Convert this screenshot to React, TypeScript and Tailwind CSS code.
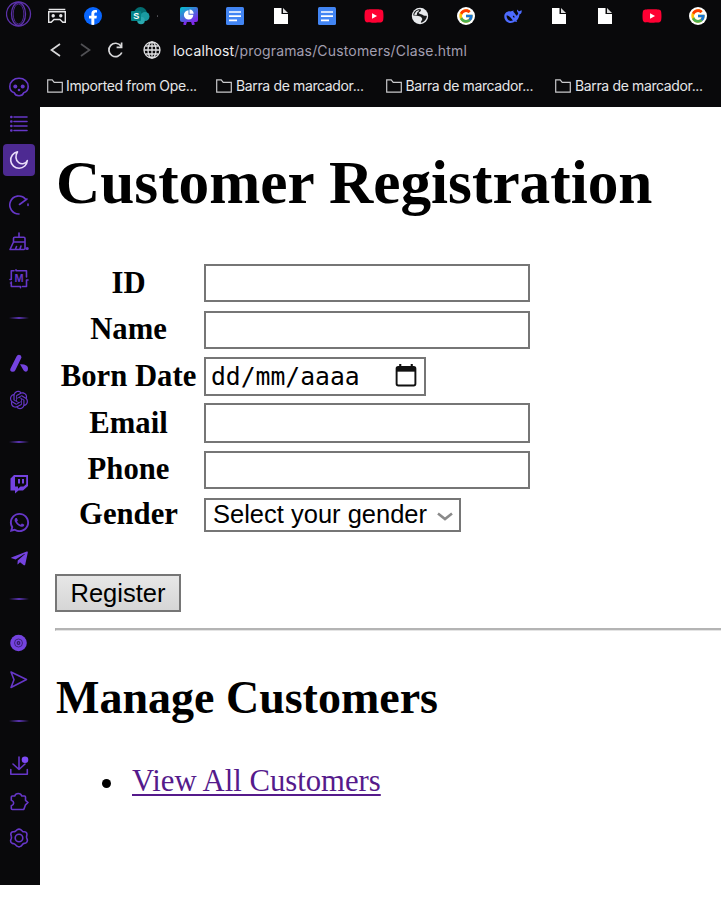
import React from "react";
import { FaFacebookF, FaTelegramPlane, FaYoutube } from "react-icons/fa";
import { FcGoogle } from "react-icons/fc";
import { RiOpenaiFill, RiWhatsappLine } from "react-icons/ri";

type Kids = { children: React.ReactNode };

function Line({ children }: Kids) {
  return (
    <svg viewBox="0 0 20 20" className="size-5" fill="none" stroke="currentColor" strokeWidth="1.6" strokeLinecap="round" strokeLinejoin="round">
      {children}
    </svg>
  );
}

function Separator({ className }: { className: string }) {
  return <div className={`h-0.5 w-5 shrink-0 bg-linear-to-r from-transparent via-[#5b34b4] to-transparent ${className}`} />;
}

function Item({ className, children }: Kids & { className: string }) {
  return <div className={`flex size-5 shrink-0 items-center justify-center ${className}`}>{children}</div>;
}

function Sidebar() {
  return (
    <aside className="flex h-[885px] w-10 shrink-0 flex-col items-center bg-[#09090b] pr-0.5 text-[#6637c8]">
      <svg viewBox="0 0 26 26" className="mt-px h-[26px] w-[26px] shrink-0" fill="none" stroke="#5c31aa" strokeWidth="1.3">
        <circle cx="12.5" cy="13" r="12" />
        <ellipse cx="12.5" cy="13" rx="7" ry="11.5" />
        <ellipse cx="12.5" cy="13" rx="5.3" ry="10" strokeWidth=".8" />
      </svg>
      <Item className="mt-[50px]">
        <Line>
          <path d="M5.3 15.8C1.8 14.8.8 12.800.8 9.500c0-5 4-8.200 9.200-8.200s9.200 3.200 9.200 8.200c0 3.300-1 5.300-4.500 6.300-.7 2.300-2.200 3-4.700 3s-4-.7-4.700-3z" />
          <g fill="currentColor" stroke="none"><circle cx="6.3" cy="9.5" r="2" /><circle cx="13.7" cy="9.5" r="2" /><circle cx="10" cy="13" r="1.3" /></g>
        </Line>
      </Item>
      <Item className="mt-[17px]">
        <Line>
          <path d="M5 3h13M5 7.500h13M5 12h13M5 16.500h13" />
          <path d="M2.300 3h.1M2.300 7.500h.1M2.300 12h.1M2.300 16.500h.1" strokeWidth="2.6" />
        </Line>
      </Item>
      <div className="mt-2.5 flex h-8 w-8 shrink-0 items-center justify-center rounded-[4px] bg-[#4d2a92] text-[#e9defa]">
        <Line><path d="M8.500 1.800a8.300 8.300 0 1 0 9.800 8.700c-1.300 3.200-5.600 4.300-8.600 2.200C6.300 10.300 6.200 5.300 8.500 1.800z" /></Line>
      </div>
      <Item className="mt-[19px]">
        <Line><path d="M10 19A9 9 0 1 1 16.500 4M19 9v1.500M10.500 9.500 18 4" /></Line>
      </Item>
      <Item className="mt-[17px]">
        <Line>
          <path d="M10 1v4M4.500 10V6.500q0-1.300 1.300-1.300h9q1.200 0 1.200 1.300V17M4.500 10H16M4.500 10 1 17.500h14M7.500 14.500 6.500 17M12 14l-1 3" />
          <circle cx="18.2" cy="16.5" r=".8" fill="currentColor" />
        </Line>
      </Item>
      <Item className="mt-[17px]">
        <div className="relative size-5">
          <Line><path d="M7 1.800h10.500V8M19 11h-1.500v6.500H13.500M11.500 18.700v-1.200H2.300V13M1 10.500h1.300V1.800H5M7 .8v1M1.500 14h.5" /></Line>
          <span className="absolute inset-0 text-center font-['Liberation_Sans'] text-[11px] leading-[19px] font-bold">M</span>
        </div>
      </Item>
      <Separator className="mt-[28px]" />
      <Item className="mt-[35px]">
        <svg viewBox="0 0 20 20" className="size-5" fill="#7443df">
          <path d="M10 .8q2.500.2 2.500 2.700L6.300 16.300q-.8 1.600-2.700 1.500-3.300-.4-2.100-3.300L7.500 2.500Q8.300.7 10 .8z" />
          <path d="M11 10.300q3.800-.4 6.300 1.200c1.500 1 2 2.300 1.500 4.500-.7 2.500-3.300 1.900-4.300.2z" />
        </svg>
      </Item>
      <Item className="mt-4"><RiOpenaiFill className="size-[22px] shrink-0" /></Item>
      <Separator className="mt-[31px]" />
      <Item className="mt-[31px]">
        <svg viewBox="0 0 20 20" className="size-5">
          <path fill="#7443df" fillRule="evenodd" d="M5 1h14v11l-5 4.500h-4.500L6 19.500V16.500H1.500V4.500zm1 2v9.500h3v2.300l2.500-2.300h3l2.700-2.300V3z" />
          <path stroke="#7443df" strokeWidth="2" d="M10 5v4.500M14 5v4.500" />
        </svg>
      </Item>
      <Item className="mt-[18px]">
        <RiWhatsappLine className="size-[23px] shrink-0" />
      </Item>
      <Item className="mt-4"><FaTelegramPlane className="size-[19px] shrink-0 text-[#7443df]" /></Item>
      <Separator className="mt-[30px]" />
      <Item className="mt-[33px]">
        <svg viewBox="0 0 20 20" className="size-5" fill="none" stroke="#351a66">
          <circle cx="9.5" cy="10" r="8.3" fill="#7443df" stroke="none" />
          <circle cx="9.5" cy="10" r="4" strokeWidth=".8" />
          <circle cx="9.5" cy="10" r="1.3" strokeWidth="1.2" />
        </svg>
      </Item>
      <Item className="mt-[17px]"><Line><path d="M2 2 17.500 9.500 2 17.500 5 9.700z" /></Line></Item>
      <Separator className="mt-[30px]" />
      <Item className="mt-[34px]">
        <Line>
          <path d="M10 1v12.500M4 8l6 5.500L16 8M1.800 13.500v4.700h16.500v-4.700" />
          <circle cx="16" cy="3.7" r="3.3" fill="#7d4af5" stroke="none" />
        </Line>
      </Item>
      <Item className="mt-4">
        <Line><path d="M2.300 5q0-1 1-1h2.400C6.800.6 11.700.6 12.800 4h2.700q1 0 1 1v3.300l2.500 2.200-2.500 2.300-1.500 4.200q-.3.500-1 .5H3.300q-1 0-1-1v-2.700c3.200-1.200 3.200-4.300 0-5.500z" /></Line>
      </Item>
      <Item className="mt-4">
        <Line>
          <path d="M8 1.800q2-1.400 4 0l1.500 1.500q.7.500 1.700.4 2.300 0 2.700 2.100.1 1-.2 2-.3 1 0 2.200l.6 1.700q.5 2.300-1.500 3.300l-1.700.4q-.9.200-1.600 1L12 18.200q-2 1.300-4 0l-1.500-1.500q-.7-.7-1.600-.9l-1.700-.4q-2-1-1.500-3.300l.6-1.700q.3-1.200 0-2.200l-.5-2q0-2.200 2.300-2.500 1.500.1 2.400-.4z" />
          <circle cx="10" cy="10" r="3.8" />
        </Line>
      </Item>
    </aside>
  );
}

function FileIcon() {
  return (
    <svg viewBox="0 0 18 18" className="size-[18px]">
      <path fill="#fff" d="M2 1h7.500v6H16v10H2z" />
      <path fill="#ddd" d="m11 1 5 5h-5z" />
    </svg>
  );
}

function DocsIcon() {
  return (
    <svg viewBox="0 0 18 18" className="size-[18px]">
      <rect width="18" height="18" rx="1.5" fill="#4285f4" />
      <path d="M3 5h12M3 9.200h12M3 13.300h8" stroke="#fff" strokeWidth="1.7" />
    </svg>
  );
}

function YoutubeIcon() {
  return (
    <div className="relative flex size-5 items-center justify-center">
      <div className="absolute h-2 w-2 bg-white" />
      <FaYoutube className="relative size-5 text-[#ff0033]" />
    </div>
  );
}

function GoogleIcon() {
  return (
    <div className="flex size-[18px] items-center justify-center rounded-full bg-white">
      <FcGoogle className="size-[16px]" />
    </div>
  );
}

function SharepointIcon() {
  return (
    <svg viewBox="0 0 20 20" className="size-5">
      <circle cx="10.5" cy="7.5" r="6.5" fill="#036c70" />
      <circle cx="15" cy="10.5" r="4.5" fill="#1a9ba1" />
      <circle cx="11" cy="14.5" r="3.8" fill="#2aa9b0" />
      <rect x="1" y="5" width="10" height="10" rx="1" fill="#038387" />
      <text x="3.2" y="13.2" fill="#fff" fontSize="9" fontWeight="700" fontFamily="Liberation Sans, sans-serif">S</text>
    </svg>
  );
}

function ChartIcon() {
  return (
    <svg viewBox="0 0 18 18" className="size-[18px]">
      <defs><linearGradient id="chart" x1="0" y1="0" x2=".7" y2="1"><stop stopColor="#00c4cc" /><stop offset="1" stopColor="#7d2ae8" /></linearGradient></defs>
      <path d="m6 13-1.500 5M12 13l1.500 5" stroke="#7d2ae8" strokeWidth="2.8" />
      <rect y="0" width="18" height="15" rx="2" fill="url(#chart)" />
      <path fill="#fff" d="M8.500 3.200v4.600h4.800A4.700 4.700 0 1 1 8.500 3.200z" />
      <path fill="#fff" d="M9.500 2.500a4.500 4.500 0 0 1 4.200 4.200H9.500z" />
    </svg>
  );
}

function EarthIcon() {
  return (
    <svg viewBox="0 0 18 18" className="size-[18px]">
      <circle cx="9" cy="9" r="8.2" fill="#e8eaed" />
      <path fill="#17181a" d="M9.500 2.300c1 1.200.2 2-1 2.700-1.700 1-.3 1.800 1.500 2.200 1.500.3 2.300 1.400 3.500 1.500.8.100 1.700-.3 2.400.3-.3 3.600-3 6.300-6 6.700-.2-1.500.9-2.100 1.300-3.200.3-1.300-.8-1.800-1.200-2.500-.6-1-2.500-.7-4-1.200-1.200-.3-2.300-.5-3.700-.3 0-3.700 3-6.500 7.200-6.200z" />
      <path fill="#e8eaed" d="M5.300 4.300c1-.9 2.200-1 3-1-.2 1.400-1.700 1.500-2.200 2.600-.3.900.2 1.700-.7 2C4.200 8.200 3.500 7.600 3 7.400z" />
    </svg>
  );
}

function WhaleIcon() {
  return (
    <svg viewBox="0 0 20 16" className="h-4 w-5" fill="#4d6bfe">
      <path d="M18.700 2.300c-.8.600-1.900.5-2.600 1.300-.6-.8-1.300-1.200-2-2-.3 1.500.1 2.600 1.200 3.500-.2 1.200-.8 2.200-1.500 2.700-1.300-.8-1.700-2.600-3.200-3.700-.7-.5-.3-.9.400-1.300-1.200-.5-2.300.2-3.400.6C4 2.900 1.200 5.300 1.300 8.700c.1 3.600 3 6.300 6.500 6.300 1.700 0 3-.6 4.100-1.400.8.400 1.700.4 2.300.2-.5-.6-.7-.9-.6-1.300 1.800-1.700 2.600-3.600 2.900-6.200 1.600-.5 2.400-2 2.200-4z" />
      <path fill="#09090b" d="M3.500 7.500c2.700-.2 4.500 2.400 6 4.500.5.600-.1 1-1 .8C5.800 13.500 3.500 10.500 3.500 7.500zM9.800 7.900c.9-.3 1.900.5 1.900 1.500-1 .5-1.700-.3-1.900-1.500z" />
    </svg>
  );
}

const tabs = [ChartIcon, DocsIcon, FileIcon, DocsIcon, YoutubeIcon, EarthIcon, GoogleIcon, WhaleIcon, FileIcon, FileIcon, YoutubeIcon, GoogleIcon];

function Folder() {
  return (
    <svg viewBox="0 0 16 14" className="h-3.5 w-4 shrink-0" fill="none" stroke="#c9c9cc" strokeWidth="1.2">
      <path d="M.7 13.200V.8h4.500l2 2.500h8.100v9.900z" />
    </svg>
  );
}

function BrowserHeader() {
  return (
    <header className="h-[107px] overflow-hidden bg-[#09090b] font-['Inter',sans-serif] text-[#e6e6e8]">
      <div className="flex h-[31px] items-center pl-2">
        <svg viewBox="0 0 18 16" className="h-4 w-[18px] shrink-0" fill="none" stroke="#e6e6e8" strokeWidth="1.4">
          <path d="M.7 1.500h16.600M.7 3.800h16.600v10.500h-2.500L12 11.500H6l-2.800 2.800H.7z" />
          <circle cx="5.2" cy="7.8" r="1" fill="#e6e6e8" /><circle cx="12.8" cy="7.8" r="1" fill="#e6e6e8" />
        </svg>
        <div className="ml-[18px] flex size-[18px] shrink-0 items-end justify-center overflow-hidden rounded-full bg-[#0866ff]">
          <FaFacebookF className="h-[15px] w-3 shrink-0 text-white" />
        </div>
        <div className="ml-7"><SharepointIcon /></div>
        <div className="ml-[7px] size-0.5 rounded-full bg-[#55555a]" />
        <div className="ml-[7px] flex">
          {tabs.map((Icon, i) => (
            <div key={i} className="flex w-[46.3px] shrink-0 items-center justify-center"><Icon /></div>
          ))}
        </div>
      </div>
      <div className="flex h-[38px] items-center pl-2.5">
        <svg viewBox="0 0 76 20" className="h-5 w-[76px] shrink-0" fill="none" stroke="#d8d8da" strokeWidth="1.7">
          <path d="M10 4 1.500 10l8.500 6" />
          <path d="m31 4 8.500 6-8.500 6" stroke="#505054" />
          <path d="M71 6a6.700 6.700 0 1 0 .8 6.500M71.600 2.500v4.800h-5" />
        </svg>
        <svg viewBox="0 0 18 18" className="ml-[17px] size-[18px] shrink-0" fill="none" stroke="#e0e0e2" strokeWidth="1.3">
          <circle cx="9" cy="9" r="8" /><ellipse cx="9" cy="9" rx="4" ry="8" /><path d="M9 1v16M1 9h16M2.500 5h13M2.500 13h13" />
        </svg>
        <p className="ml-3 text-[14px] tracking-[0.16px] whitespace-nowrap text-[#a29eb0]">
          <span className="text-[#efeff1]">localhost</span>/programas/Customers/Clase.html
        </p>
      </div>
      <div className="flex h-[33px] items-center pl-[7px] text-[14px] tracking-[-0.36px] whitespace-nowrap">
        <div className="flex w-[169px] shrink-0 items-center gap-[3px]"><Folder />Imported from Ope...</div>
        {[0, 1, 2].map((i) => (
          <div key={i} className="flex w-[169.5px] shrink-0 items-center gap-1"><Folder />Barra de marcador...</div>
        ))}
      </div>
    </header>
  );
}

function Row({ label, className, labelClassName = "mt-0.5", children }: Kids & { label: string; className: string; labelClassName?: string }) {
  return (
    <div className={`flex items-start ${className}`}>
      <label className={`mr-[7px] w-[137px] shrink-0 text-center text-[30.7px] leading-[34px] font-bold whitespace-nowrap ${labelClassName}`}>{label}</label>
      {children}
    </div>
  );
}

function TextBox({ className }: { className: string }) {
  return <input className={`w-[326px] border-2 border-[#767676] bg-white ${className}`} />;
}

function CustomerPage() {
  return (
    <main className="h-[778px] overflow-hidden bg-white pl-[15px] font-['Liberation_Serif',serif] text-black">
      <h1 className="mt-10 pl-px text-[61.3px] leading-[70px] font-bold whitespace-nowrap">Customer Registration</h1>
      <form className="mt-[47px] pl-[5px]">
        <Row label="ID" className="h-[46px]"><TextBox className="h-[38px]" /></Row>
        <Row label="Name" className="h-[46px]"><TextBox className="mt-px h-[38px]" /></Row>
        <Row label="Born Date" className="h-[47px]" labelClassName="mt-[3px]">
          <div className="mt-px flex h-[39px] w-[222px] items-center border-2 border-[#767676] pl-[5px] font-['DejaVu_Sans_Mono',monospace] text-[24.7px]">
            dd/mm/aaaa
            <svg viewBox="0 0 22 24" className="mb-0.5 ml-[35px] h-[23px] w-[22px] shrink-0">
              <path d="M5 0v5M17 0v5" stroke="#111" strokeWidth="2.2" />
              <rect x="1.2" y="3" width="19.6" height="19.5" rx="1.8" fill="none" stroke="#111" strokeWidth="2" />
              <path d="M1 3h20v5H1z" fill="#111" />
            </svg>
          </div>
        </Row>
        <Row label="Email" className="h-[47px]" labelClassName="mt-[3px]"><TextBox className="h-10" /></Row>
        <Row label="Phone" className="h-[46px]"><TextBox className="mt-px h-[38px]" /></Row>
        <Row label="Gender" className="h-[37px]" labelClassName="mt-px">
          <div className="mt-0.5 flex h-[34px] w-[257px] items-center border-2 border-[#767676] pb-px pl-[7px] font-['Liberation_Sans',sans-serif] text-[25.5px] whitespace-nowrap">
            Select your gender
            <svg viewBox="0 0 16 10" className="mt-1 ml-2.5 h-2.5 w-4 shrink-0" fill="none" stroke="#8a8a8a" strokeWidth="2.6"><path d="m1 1.500 7 5.500 7-5.500" /></svg>
          </div>
        </Row>
        <button type="button" className="mt-[41px] -ml-[5px] block h-[38px] w-[126px] border-2 border-[#767676] bg-linear-to-b from-[#e7e7e7] to-[#d6d6d6] font-['Liberation_Sans',sans-serif] text-[25.5px] leading-[32px]">Register</button>
      </form>
      <hr className="mt-4 h-[3px] border-0 border-t-2 border-b border-l border-t-[#b4b4b4] border-b-[#e4e4e4] border-l-[#aaa]" />
      <h2 className="mt-[40px] pl-px text-[46px] leading-[54px] font-bold whitespace-nowrap">Manage Customers</h2>
      <ul className="mt-[39px] pl-[47px]">
        <li className="flex items-center text-[30.7px] leading-[35px]">
          <span className="mt-1 mr-[21px] size-[9px] rounded-full bg-black" />
          <a href="#" className="text-[#551a8b] underline decoration-2 underline-offset-[3px]">View All Customers</a>
        </li>
      </ul>
    </main>
  );
}

export default function App() {
  return (
    <div className="flex h-[914px] w-[721px] items-start overflow-hidden bg-white">
      <Sidebar />
      <div className="min-w-0 flex-1">
        <BrowserHeader />
        <CustomerPage />
      </div>
    </div>
  );
}
